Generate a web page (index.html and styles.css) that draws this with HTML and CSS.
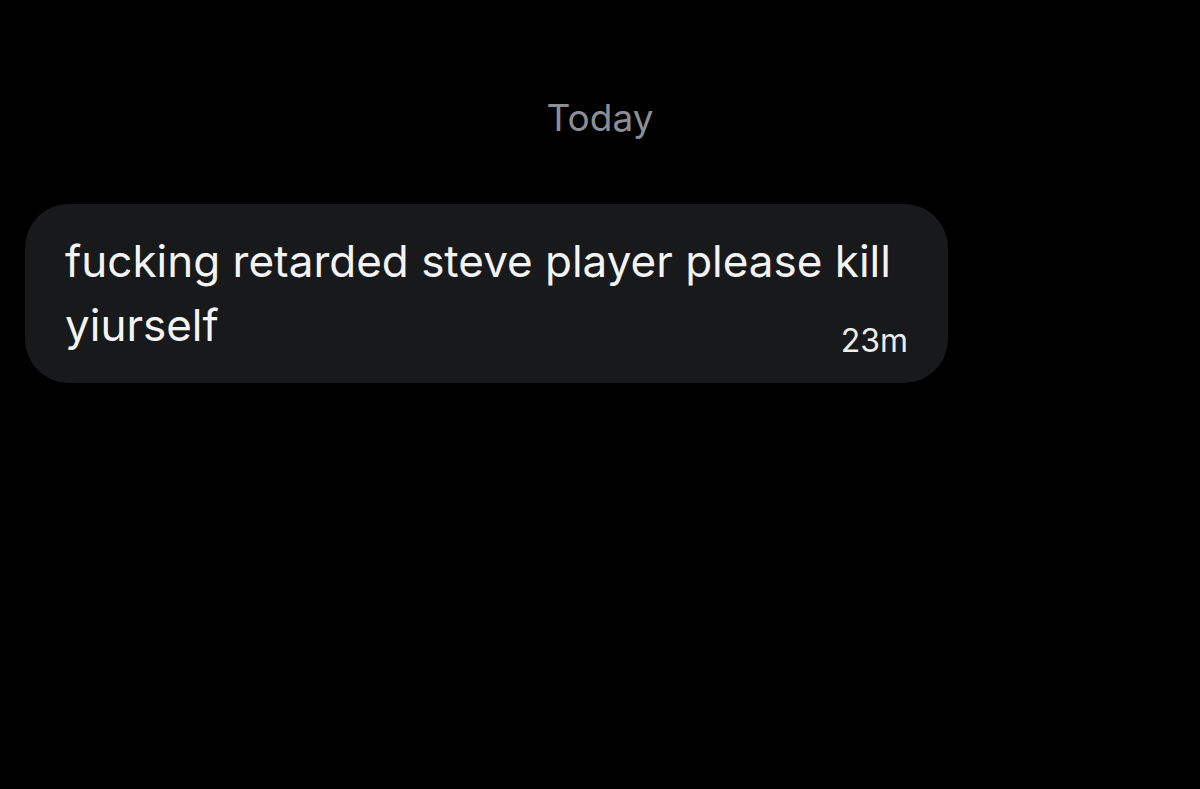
FILE: index.html
```html
<!DOCTYPE html>
<html>
<head>
<meta charset="utf-8">
<link rel="stylesheet" href="styles.css">
</head>
<body>
<main class="chat">
  <div class="day">Today</div>
  <div class="bubble">
    <div class="body"><span class="text">fucking retarded steve player please kill yiurself</span></div>
    <span class="time">23m</span>
  </div>
</main>
</body>
</html>
```
FILE: styles.css
```css
html, body {
  margin: 0;
  padding: 0;
  background: #000;
  width: 1200px;
  height: 789px;
  overflow: hidden;
}
.chat {
  display: flex;
  flex-direction: column;
  padding: 96px 0 0 25px;
  font-family: Inter, "Liberation Sans", sans-serif;
}
.day {
  width: 1150px;
  text-align: center;
  color: #8b8f95;
  font-size: 37px;
  line-height: 44px;
  margin-bottom: 64px;
}
.bubble {
  width: 923px;
  box-sizing: border-box;
  height: 179px;
  background: #18191b;
  border-radius: 44px;
  padding: 25px 40px 0 40px;
  position: relative;
}
.body {
  color: #f3f3f3;
  font-size: 44px;
  line-height: 64px;
  width: 850px;
}
.text {
  display: inline;
}
.time {
  position: absolute;
  right: 40px;
  bottom: 24px;
  color: #ececec;
  font-size: 32px;
  line-height: 36px;
}
```
